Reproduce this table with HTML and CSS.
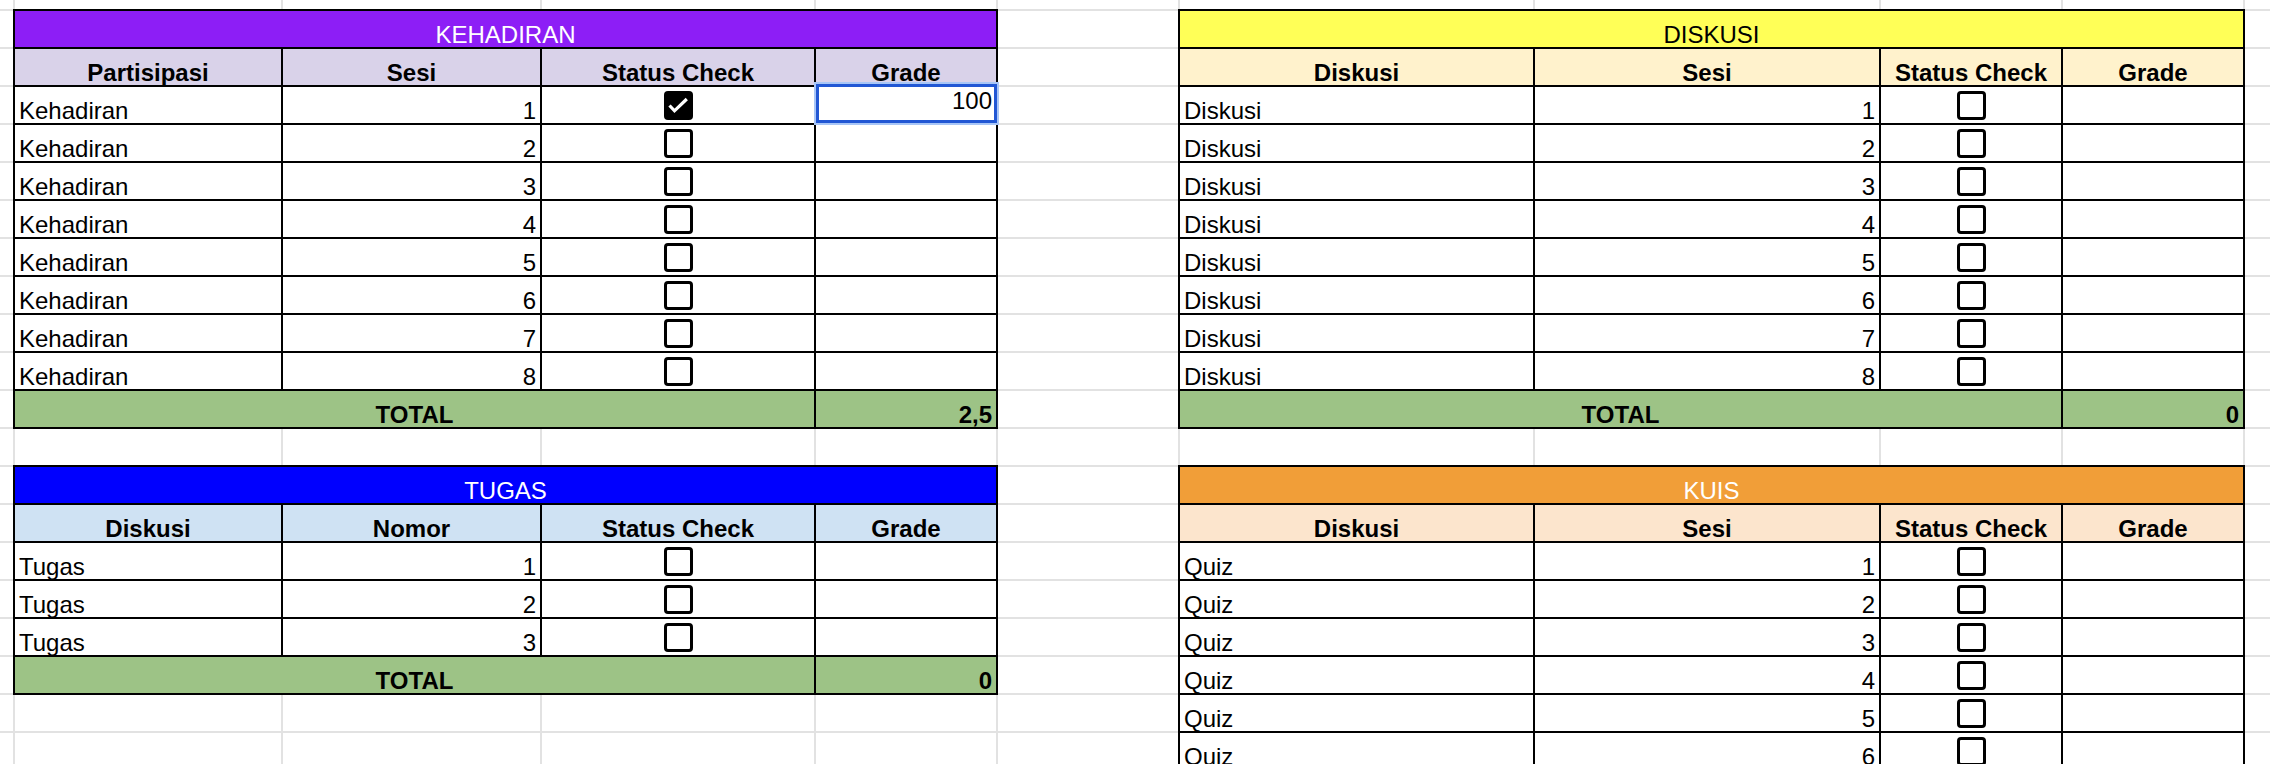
FILE: index.html
```html
<!DOCTYPE html>
<html lang="id">
<head>
<meta charset="utf-8">
<title>Rekap Nilai</title>
<link rel="stylesheet" href="styles.css">
</head>
<body>
<div class="sheet">
  <div class="col left">
    <section class="tbl">
      <div class="c title t-purple">KEHADIRAN</div>
      <div class="c b ctr h-purple">Partisipasi</div>
      <div class="c b ctr h-purple">Sesi</div>
      <div class="c b ctr h-purple">Status Check</div>
      <div class="c b ctr h-purple">Grade</div>

      <div class="c">Kehadiran</div><div class="c r">1</div><div class="c box"><span class="cb on"><svg viewBox="0 0 29 29" width="29" height="29"><path d="M5.5 14.5L10.5 19.8L22.8 8" fill="none" stroke="#fff" stroke-width="3.2"/></svg></span></div><div class="c r top sel">100</div>
      <div class="c">Kehadiran</div><div class="c r">2</div><div class="c box"><span class="cb"></span></div><div class="c"></div>
      <div class="c">Kehadiran</div><div class="c r">3</div><div class="c box"><span class="cb"></span></div><div class="c"></div>
      <div class="c">Kehadiran</div><div class="c r">4</div><div class="c box"><span class="cb"></span></div><div class="c"></div>
      <div class="c">Kehadiran</div><div class="c r">5</div><div class="c box"><span class="cb"></span></div><div class="c"></div>
      <div class="c">Kehadiran</div><div class="c r">6</div><div class="c box"><span class="cb"></span></div><div class="c"></div>
      <div class="c">Kehadiran</div><div class="c r">7</div><div class="c box"><span class="cb"></span></div><div class="c"></div>
      <div class="c">Kehadiran</div><div class="c r">8</div><div class="c box"><span class="cb"></span></div><div class="c"></div>

      <div class="c b ctr total">TOTAL</div><div class="c b r t-green">2,5</div>
    </section>

    <section class="tbl">
      <div class="c title t-blue">TUGAS</div>
      <div class="c b ctr h-blue">Diskusi</div>
      <div class="c b ctr h-blue">Nomor</div>
      <div class="c b ctr h-blue">Status Check</div>
      <div class="c b ctr h-blue">Grade</div>

      <div class="c">Tugas</div><div class="c r">1</div><div class="c box"><span class="cb"></span></div><div class="c"></div>
      <div class="c">Tugas</div><div class="c r">2</div><div class="c box"><span class="cb"></span></div><div class="c"></div>
      <div class="c">Tugas</div><div class="c r">3</div><div class="c box"><span class="cb"></span></div><div class="c"></div>

      <div class="c b ctr total">TOTAL</div><div class="c b r t-green">0</div>
    </section>
  </div>

  <div class="col right">
    <section class="tbl">
      <div class="c title t-yellow">DISKUSI</div>
      <div class="c b ctr h-yellow">Diskusi</div>
      <div class="c b ctr h-yellow">Sesi</div>
      <div class="c b ctr h-yellow">Status Check</div>
      <div class="c b ctr h-yellow">Grade</div>

      <div class="c">Diskusi</div><div class="c r">1</div><div class="c box"><span class="cb"></span></div><div class="c"></div>
      <div class="c">Diskusi</div><div class="c r">2</div><div class="c box"><span class="cb"></span></div><div class="c"></div>
      <div class="c">Diskusi</div><div class="c r">3</div><div class="c box"><span class="cb"></span></div><div class="c"></div>
      <div class="c">Diskusi</div><div class="c r">4</div><div class="c box"><span class="cb"></span></div><div class="c"></div>
      <div class="c">Diskusi</div><div class="c r">5</div><div class="c box"><span class="cb"></span></div><div class="c"></div>
      <div class="c">Diskusi</div><div class="c r">6</div><div class="c box"><span class="cb"></span></div><div class="c"></div>
      <div class="c">Diskusi</div><div class="c r">7</div><div class="c box"><span class="cb"></span></div><div class="c"></div>
      <div class="c">Diskusi</div><div class="c r">8</div><div class="c box"><span class="cb"></span></div><div class="c"></div>

      <div class="c b ctr total">TOTAL</div><div class="c b r t-green">0</div>
    </section>

    <section class="tbl">
      <div class="c title t-orange">KUIS</div>
      <div class="c b ctr h-orange">Diskusi</div>
      <div class="c b ctr h-orange">Sesi</div>
      <div class="c b ctr h-orange">Status Check</div>
      <div class="c b ctr h-orange">Grade</div>

      <div class="c">Quiz</div><div class="c r">1</div><div class="c box"><span class="cb"></span></div><div class="c"></div>
      <div class="c">Quiz</div><div class="c r">2</div><div class="c box"><span class="cb"></span></div><div class="c"></div>
      <div class="c">Quiz</div><div class="c r">3</div><div class="c box"><span class="cb"></span></div><div class="c"></div>
      <div class="c">Quiz</div><div class="c r">4</div><div class="c box"><span class="cb"></span></div><div class="c"></div>
      <div class="c">Quiz</div><div class="c r">5</div><div class="c box"><span class="cb"></span></div><div class="c"></div>
      <div class="c">Quiz</div><div class="c r">6</div><div class="c box"><span class="cb"></span></div><div class="c"></div>
    </section>
  </div>
</div>
</body>
</html>
```

FILE: styles.css
```css
html, body {
  margin: 0;
  padding: 0;
}

body {
  width: 2270px;
  height: 764px;
  overflow: hidden;
  background-color: #fff;
  background-image:
    linear-gradient(to right,
      transparent 13px, #e2e2e2 13px 15px,
      transparent 15px 281px, #e2e2e2 281px 283px,
      transparent 283px 540px, #e2e2e2 540px 542px,
      transparent 542px 814px, #e2e2e2 814px 816px,
      transparent 816px 996px, #e2e2e2 996px 998px,
      transparent 998px 1178px, #e2e2e2 1178px 1180px,
      transparent 1180px 1533px, #e2e2e2 1533px 1535px,
      transparent 1535px 1879px, #e2e2e2 1879px 1881px,
      transparent 1881px 2061px, #e2e2e2 2061px 2063px,
      transparent 2063px 2243px, #e2e2e2 2243px 2245px,
      transparent 2245px),
    repeating-linear-gradient(to bottom,
      transparent 0 9px, #e2e2e2 9px 11px, transparent 11px 38px);
  font-family: "Liberation Sans", Arial, sans-serif;
  color: #000;
}

.sheet {
  display: flex;
  align-items: flex-start;
  gap: 180px;
  padding: 9px 0 0 13px;
}

.col {
  display: flex;
  flex-direction: column;
  gap: 36px;
}

.tbl {
  display: grid;
  grid-auto-rows: 36px;
  gap: 2px;
  background: #000;
  border: 2px solid #000;
}

.left .tbl {
  grid-template-columns: 266px 257px 272px 180px;
}

.right .tbl {
  grid-template-columns: 353px 344px 180px 180px;
}

.c {
  position: relative;
  display: flex;
  align-items: flex-end;
  justify-content: flex-start;
  padding: 0 4px;
  background: #fff;
  font-size: 24px;
  line-height: 24px;
  white-space: nowrap;
  min-width: 0;
}

.c.r { justify-content: flex-end; }
.c.ctr { justify-content: center; }
.c.b { font-weight: 700; }
.c.top { align-items: flex-start; padding-top: 2px; }

.c.box {
  align-items: center;
  justify-content: center;
}

.title {
  grid-column: 1 / -1;
  justify-content: center;
  font-weight: 400;
}

.total {
  grid-column: span 3;
  background: #9dc386;
}

.t-green { background: #9dc386; }

.t-purple { background: #8d1ef6; color: #fff; }
.h-purple { background: #d9d2e9; }

.t-yellow { background: #ffff57; color: #000; }
.h-yellow { background: #fff2cc; }

.t-blue { background: #0000ff; color: #fff; }
.h-blue { background: #cfe2f3; }

.t-orange { background: #f19e38; color: #fff; }
.h-orange { background: #fce5cd; }

.cb {
  display: block;
  box-sizing: border-box;
  width: 29px;
  height: 29px;
  border: 3px solid #000;
  border-radius: 4px;
  background: #fff;
}

.cb.on {
  border: none;
  background: #000;
}

.cb svg {
  display: block;
}

.sel::after {
  content: "";
  position: absolute;
  left: -2px;
  right: -3px;
  top: -5px;
  bottom: -2px;
  border: 2px solid #a8c6f7;
  box-shadow: inset 0 0 0 3px #2157d4;
  pointer-events: none;
}
```
